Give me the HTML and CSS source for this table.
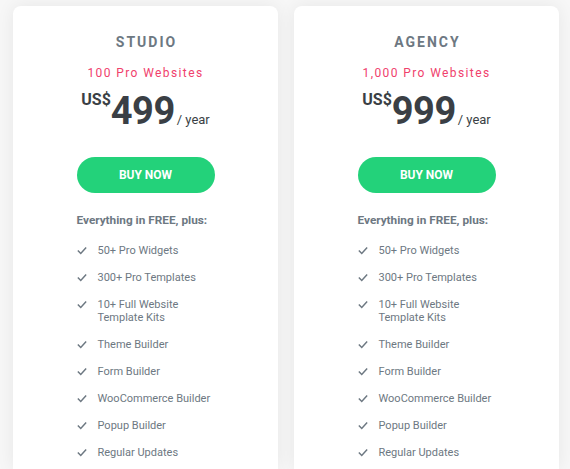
FILE: index.html
```html
<!DOCTYPE html>
<html lang="en">
<head>
    <meta charset="UTF-8">
    <meta name="viewport" content="width=device-width, initial-scale=1.0">
    <title>Pricing</title>
    <link rel="stylesheet" href="styles.css">
</head>
<body>
    <div class="plans">
        <div class="card">
            <h2 class="plan-name">STUDIO</h2>
            <p class="sites">100 Pro Websites</p>
            <div class="price">
                <span class="currency">US$</span>
                <span class="amount">499</span>
                <span class="period">/ year</span>
            </div>
            <a class="buy" href="#">BUY NOW</a>
            <div class="features">
                <p class="features-title">Everything in FREE, plus:</p>
                <ul>
                    <li><svg viewBox="0 0 12 10"><polyline points="1,5 4.5,8.5 11,1.5"/></svg><span>50+ Pro Widgets</span></li>
                    <li><svg viewBox="0 0 12 10"><polyline points="1,5 4.5,8.5 11,1.5"/></svg><span>300+ Pro Templates</span></li>
                    <li><svg viewBox="0 0 12 10"><polyline points="1,5 4.5,8.5 11,1.5"/></svg><span>10+ Full Website Template Kits</span></li>
                    <li><svg viewBox="0 0 12 10"><polyline points="1,5 4.5,8.5 11,1.5"/></svg><span>Theme Builder</span></li>
                    <li><svg viewBox="0 0 12 10"><polyline points="1,5 4.5,8.5 11,1.5"/></svg><span>Form Builder</span></li>
                    <li><svg viewBox="0 0 12 10"><polyline points="1,5 4.5,8.5 11,1.5"/></svg><span>WooCommerce Builder</span></li>
                    <li><svg viewBox="0 0 12 10"><polyline points="1,5 4.5,8.5 11,1.5"/></svg><span>Popup Builder</span></li>
                    <li><svg viewBox="0 0 12 10"><polyline points="1,5 4.5,8.5 11,1.5"/></svg><span>Regular Updates</span></li>
                </ul>
            </div>
        </div>

        <div class="card">
            <h2 class="plan-name">AGENCY</h2>
            <p class="sites">1,000 Pro Websites</p>
            <div class="price">
                <span class="currency">US$</span>
                <span class="amount">999</span>
                <span class="period">/ year</span>
            </div>
            <a class="buy" href="#">BUY NOW</a>
            <div class="features">
                <p class="features-title">Everything in FREE, plus:</p>
                <ul>
                    <li><svg viewBox="0 0 12 10"><polyline points="1,5 4.5,8.5 11,1.5"/></svg><span>50+ Pro Widgets</span></li>
                    <li><svg viewBox="0 0 12 10"><polyline points="1,5 4.5,8.5 11,1.5"/></svg><span>300+ Pro Templates</span></li>
                    <li><svg viewBox="0 0 12 10"><polyline points="1,5 4.5,8.5 11,1.5"/></svg><span>10+ Full Website Template Kits</span></li>
                    <li><svg viewBox="0 0 12 10"><polyline points="1,5 4.5,8.5 11,1.5"/></svg><span>Theme Builder</span></li>
                    <li><svg viewBox="0 0 12 10"><polyline points="1,5 4.5,8.5 11,1.5"/></svg><span>Form Builder</span></li>
                    <li><svg viewBox="0 0 12 10"><polyline points="1,5 4.5,8.5 11,1.5"/></svg><span>WooCommerce Builder</span></li>
                    <li><svg viewBox="0 0 12 10"><polyline points="1,5 4.5,8.5 11,1.5"/></svg><span>Popup Builder</span></li>
                    <li><svg viewBox="0 0 12 10"><polyline points="1,5 4.5,8.5 11,1.5"/></svg><span>Regular Updates</span></li>
                </ul>
            </div>
        </div>
    </div>
</body>
</html>
```

FILE: styles.css
```css
/* Reset and base styles */
* {
    margin: 0;
    padding: 0;
    box-sizing: border-box;
}
body {
    font-family: Roboto, "Liberation Sans", sans-serif;
    color: #6d7882;
    background: #f7f7f7;
    height: 469px;
    overflow: hidden;
}

/* Plan cards */
.plans {
    display: flex;
    gap: 16px;
    padding: 6px 11px 0 13px;
}
.card {
    flex: 1;
    height: 463px;
    background: white;
    border-radius: 8px 8px 0 0;
    box-shadow: 0 0 18px rgba(0, 0, 0, 0.07);
    padding-top: 26px;
    display: flex;
    flex-direction: column;
    align-items: center;
}
.plan-name {
    font-size: 14px;
    line-height: 20px;
    font-weight: 700;
    letter-spacing: 2px;
    color: #6d7882;
    padding-left: 2px;
}
.sites {
    margin-top: 12px;
    font-size: 12px;
    line-height: 18px;
    letter-spacing: 1.4px;
    color: #f0416c;
}

/* Price */
.price {
    display: flex;
    align-items: baseline;
    margin-top: 10px;
    color: #3a3f45;
}
.currency {
    align-self: flex-start;
    font-size: 16px;
    line-height: 16px;
    font-weight: 700;
}
.amount {
    font-size: 38px;
    line-height: 38px;
    font-weight: 700;
    letter-spacing: -0.5px;
}
.period {
    font-size: 13px;
    margin-left: 2px;
}

/* Button */
.buy {
    margin-top: 27px;
    width: 138px;
    height: 36px;
    border-radius: 18px;
    background: #23d27a;
    color: white;
    font-size: 12px;
    font-weight: 700;
    text-decoration: none;
    display: flex;
    align-items: center;
    justify-content: center;
}

/* Feature list */
.features {
    width: 138px;
    margin-top: 19px;
}
.features-title {
    font-size: 11.8px;
    line-height: 16px;
    font-weight: 700;
    white-space: nowrap;
}
.features ul {
    list-style: none;
    margin-top: 16px;
    display: flex;
    flex-direction: column;
    gap: 14px;
}
.features li {
    display: flex;
    font-size: 11px;
    line-height: 13px;
}
.features svg {
    width: 10px;
    height: 9px;
    flex-shrink: 0;
    margin: 2px 11px 0 0;
    fill: none;
    stroke: #6d7882;
    stroke-width: 1.8;
}
```
